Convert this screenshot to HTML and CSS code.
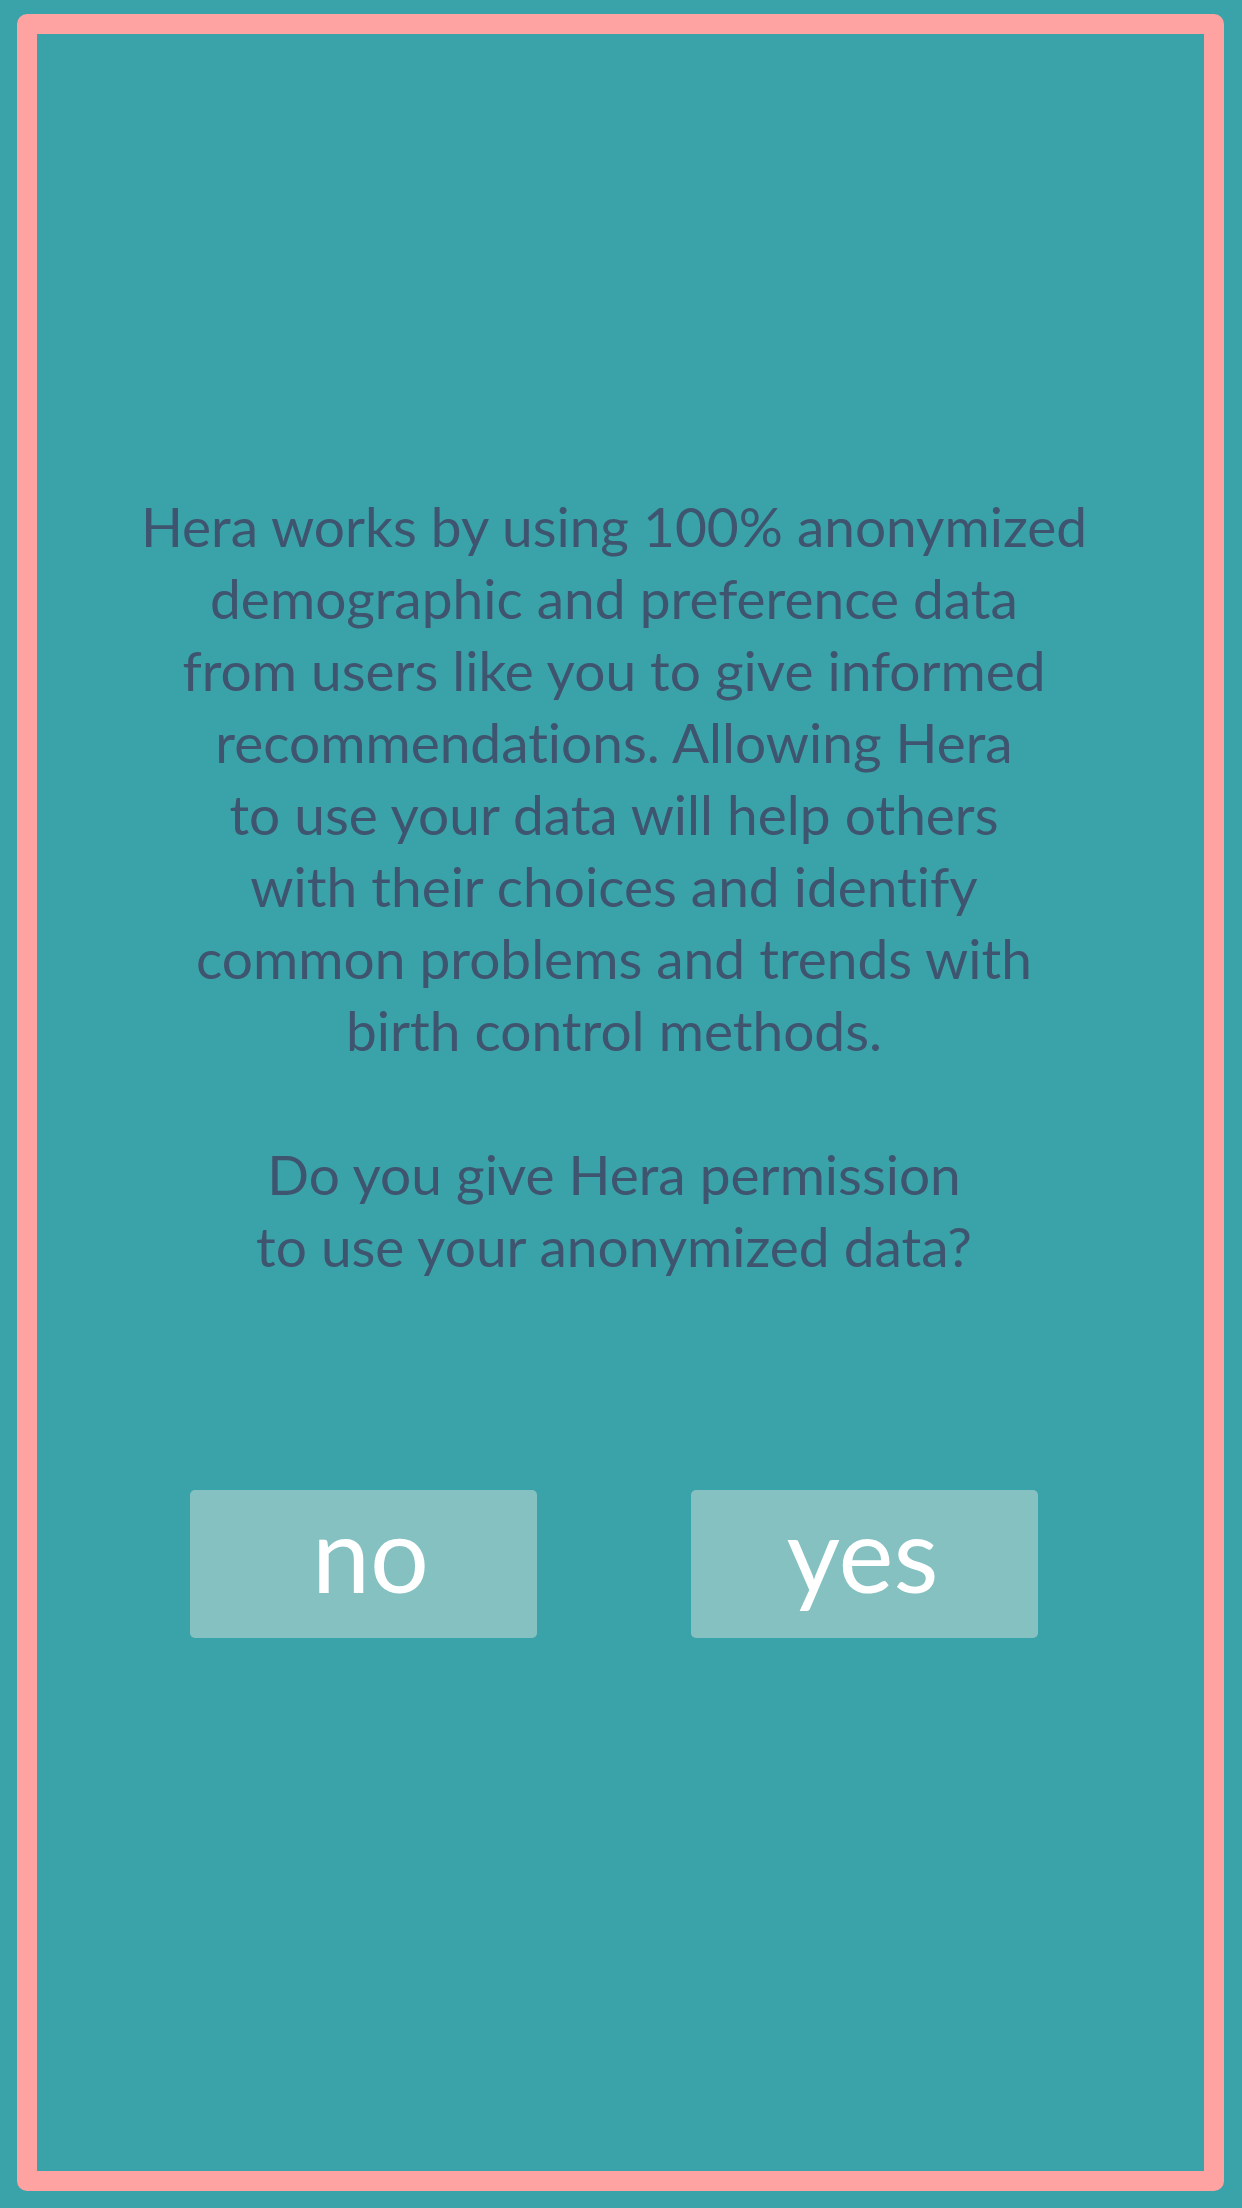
FILE: index.html
```html
<!DOCTYPE html>
<html lang="en">
  <head>
    <meta charset="UTF-8" />
    <meta name="viewport" content="width=device-width, initial-scale=1.0" />
    <title>Hera - Data Permission</title>
    <link rel="stylesheet" href="styles.css">
  </head>
  <body>
    <div class="frame">
      <p class="message">
        Hera works by using 100% anonymized<br />
        demographic and preference data<br />
        from users like you to give informed<br />
        recommendations. Allowing Hera<br />
        to use your data will help others<br />
        with their choices and identify<br />
        common problems and trends with<br />
        birth control methods.<br />
        <br />
        Do you give Hera permission<br />
        to use your anonymized data?
      </p>

      <div class="choices">
        <button class="choice choice-no">no</button>
        <button class="choice choice-yes">yes</button>
      </div>
    </div>
  </body>
</html>
```

FILE: styles.css
```css
* {
  margin: 0;
  padding: 0;
  box-sizing: border-box;
}
body {
  background: #3aa3a9;
  font-family: Lato, "Open Sans", sans-serif;
  width: 1242px;
  height: 2208px;
  overflow: hidden;
}
.frame {
  margin: 14px 18px 17px 17px;
  height: 2177px;
  border: 20px solid #ffa2a2;
  border-radius: 10px;
  display: flex;
  flex-direction: column;
  align-items: center;
  padding-right: 13px;
}
.message {
  margin-top: 456px;
  text-align: center;
  color: #3f546e;
  font-size: 55px;
  line-height: 72px;
  font-variant-ligatures: none;
}
.choices {
  display: flex;
  gap: 154px;
  margin-top: 208px;
}
.choice {
  width: 347px;
  height: 148px;
  border: none;
  border-radius: 5px;
  background: #86c1c2;
  color: #ffffff;
  font-family: Lato, "Open Sans", sans-serif;
  font-size: 104px;
  line-height: 1;
  display: flex;
  align-items: center;
  justify-content: center;
  padding-bottom: 22px;
  cursor: pointer;
}
.choice-no {
  padding-left: 14px;
}
.choice-yes {
  padding-right: 4px;
}
```
